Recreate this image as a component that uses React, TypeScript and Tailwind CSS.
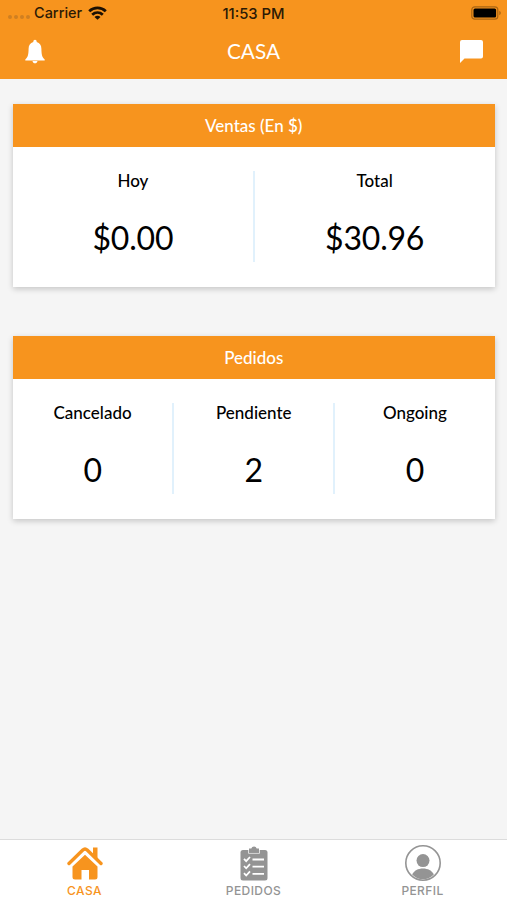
type Stat = { label: string; value: string };

const sales: Stat[] = [
  { label: 'Hoy', value: '$0.00' },
  { label: 'Total', value: '$30.96' },
];

const orders: Stat[] = [
  { label: 'Cancelado', value: '0' },
  { label: 'Pendiente', value: '2' },
  { label: 'Ongoing', value: '0' },
];

function StatusBar() {
  return (
    <div className="grid h-[25px] grid-cols-3 items-center font-['Inter',sans-serif] text-[14.5px] font-medium text-[#2b1a05]">
      <div className="flex items-center pl-2">
        <div className="mt-2 flex gap-[2px]">
          {[0, 1, 2, 3].map((i) => (
            <span key={i} className="h-1 w-1 rounded-full bg-[#cf7f22]" />
          ))}
        </div>
        <span className="ml-[4px]">Carrier</span>
        <svg className="ml-[6px] h-[14px] w-[19px]" viewBox="0 0 19 14" fill="none" stroke="#1c1003" strokeWidth="2.8">
          <path d="M1.2 5.2C6 .7 13 .7 17.8 5.2" />
          <path d="M4.2 8.8C7.3 6 11.7 6 14.8 8.8" />
          <path d="M9.5 13.800L6.500 10.900C8.200 9.400 10.800 9.400 12.500 10.900Z" fill="#1c1003" stroke="none" />
        </svg>
      </div>
      <span className="pt-[2px] text-center text-[14.8px] leading-5">11:53 PM</span>
      <svg className="mr-[5px] h-[14px] w-[31px] justify-self-end" viewBox="0 0 31 14">
        <rect x="0.8" y="0.8" width="26" height="12.4" rx="3" fill="none" stroke="#a96412" strokeWidth="1.2" />
        <rect x="2.5" y="2.5" width="22.6" height="9" rx="1.5" fill="#000" />
        <path d="M28.3 4.8c2 .8 2 3.6 0 4.400z" fill="#a96412" />
      </svg>
    </div>
  );
}

function Header() {
  return (
    <header className="h-[79px] bg-[#f7941e]">
      <StatusBar />
      <div className="flex h-[53px] items-center justify-between pr-6 pl-[25px] text-white">
        <svg className="h-[25px] w-5" viewBox="0 0 20 25" fill="currentColor">
          <path d="M8.300 2.500a1.700 1.700 0 0 1 3.400 0v.4c3.200.8 4.600 3.300 4.700 6.800.1 5.300.5 8.300 3.300 10.800v1H.3v-1c2.800-2.500 3.200-5.500 3.300-10.800.1-3.500 1.500-6 4.700-6.800zM7.500 22h5c-.3 1.500-1.200 2.300-2.500 2.300s-2.200-.8-2.500-2.300z" />
        </svg>
        <h1 className="pl-[2px] text-[20.8px] leading-none">CASA</h1>
        <svg className="h-[23px] w-[23px]" viewBox="0 0 23 23" fill="currentColor">
          <path d="M2 0h19a2 2 0 0 1 2 2v14.500a2 2 0 0 1-2 2H4.500L0 23V2a2 2 0 0 1 2-2z" />
        </svg>
      </div>
    </header>
  );
}

function StatCard({ title, stats }: { title: string; stats: Stat[] }) {
  return (
    <section className="h-[183px] bg-white shadow-[0_2px_6px_rgba(0,0,0,0.2)]">
      <h2 className="flex h-[43px] items-center justify-center bg-[#f7941e] text-[17px] font-medium text-white">
        {title}
      </h2>
      <div className="flex pt-6">
        {stats.map((stat) => (
          <div
            key={stat.label}
            className="flex h-[91px] flex-1 flex-col items-center border-r-2 border-[#e1f1fc] text-black last:border-r-0"
          >
            <p className="text-[17px] leading-5 font-medium">{stat.label}</p>
            <p className="mt-[27px] text-[32px] leading-10 tracking-[-0.2px]">{stat.value}</p>
          </div>
        ))}
      </div>
    </section>
  );
}

function HomeIcon() {
  return (
    <svg className="h-[34px] w-9" viewBox="0 0 36 34" fill="currentColor">
      <path d="M2 17.500L15.800 4q2.200-2 4.400 0L34 17.500" fill="none" stroke="currentColor" strokeWidth="3.4" strokeLinecap="round" />
      <path d="M26 1.500h4.500v11L26 8z" />
      <path d="M18 8.800L30.500 20.500V31a2.500 2.500 0 0 1-2.500 2.500h-6V24h-7.500v9.500H8A2.500 2.500 0 0 1 5.500 31V20.500z" />
    </svg>
  );
}

function OrdersIcon() {
  return (
    <svg className="h-9 w-7" viewBox="0 0 28 36">
      <rect x="0.5" y="5" width="27" height="30.5" rx="2.5" fill="currentColor" />
      <path d="M8.500 4v4.300h11V4" fill="none" stroke="#fff" strokeOpacity="0.7" strokeWidth="1" />
      <path d="M9 3.500h2.300a2.800 2.800 0 0 1 5.400 0H19V7.800H9z" fill="currentColor" />
      <g fill="none" stroke="#fff" strokeWidth="1.8">
        <path d="M4 13.800l2.200 2.300L10 12M4 21l2.200 2.300L10 19.200M4 28.200l2.200 2.300L10 26.400" />
        <path d="M12.500 14.500H24M12.500 21.700H24M12.500 28.900H24" />
      </g>
    </svg>
  );
}

function ProfileIcon() {
  return (
    <svg className="h-9 w-9" viewBox="0 0 36 36">
      <circle cx="18" cy="18" r="17.2" fill="none" stroke="currentColor" strokeWidth="1.6" />
      <circle cx="18" cy="15.6" r="6.5" fill="currentColor" />
      <path d="M7.200 29.500c1.800-4 6-6 10.800-6s9 2 10.800 6C26 32.500 22.300 34.300 18 34.300S10 32.500 7.200 29.500z" fill="currentColor" />
    </svg>
  );
}

const tabs = [
  { name: 'CASA', icon: HomeIcon, active: true },
  { name: 'PEDIDOS', icon: OrdersIcon, active: false },
  { name: 'PERFIL', icon: ProfileIcon, active: false },
];

export default function App() {
  return (
    <div className="flex h-[900px] w-[507px] flex-col overflow-hidden bg-[#f5f5f5] font-['Lato',sans-serif]">
      <Header />
      <main className="flex flex-1 flex-col gap-[49px] pt-[25px] pr-[12.5px] pl-[13px]">
        <StatCard title="Ventas (En $)" stats={sales} />
        <StatCard title="Pedidos" stats={orders} />
      </main>
      {/* Tab bar */}
      <nav className="flex h-[61px] border-t border-[#dcdcdc] bg-white">
        {tabs.map(({ name, icon: Icon, active }) => (
          <div
            key={name}
            className={`flex flex-1 flex-col items-center pt-[5px] ${active ? 'text-[#f7941e]' : 'text-[#949494]'}`}
          >
            <div className="flex h-9 items-center">
              <Icon />
            </div>
            <span className="mt-[3px] font-['Inter',sans-serif] text-[12px] leading-[14px] font-medium tracking-[0.4px]">
              {name}
            </span>
          </div>
        ))}
      </nav>
    </div>
  );
}
